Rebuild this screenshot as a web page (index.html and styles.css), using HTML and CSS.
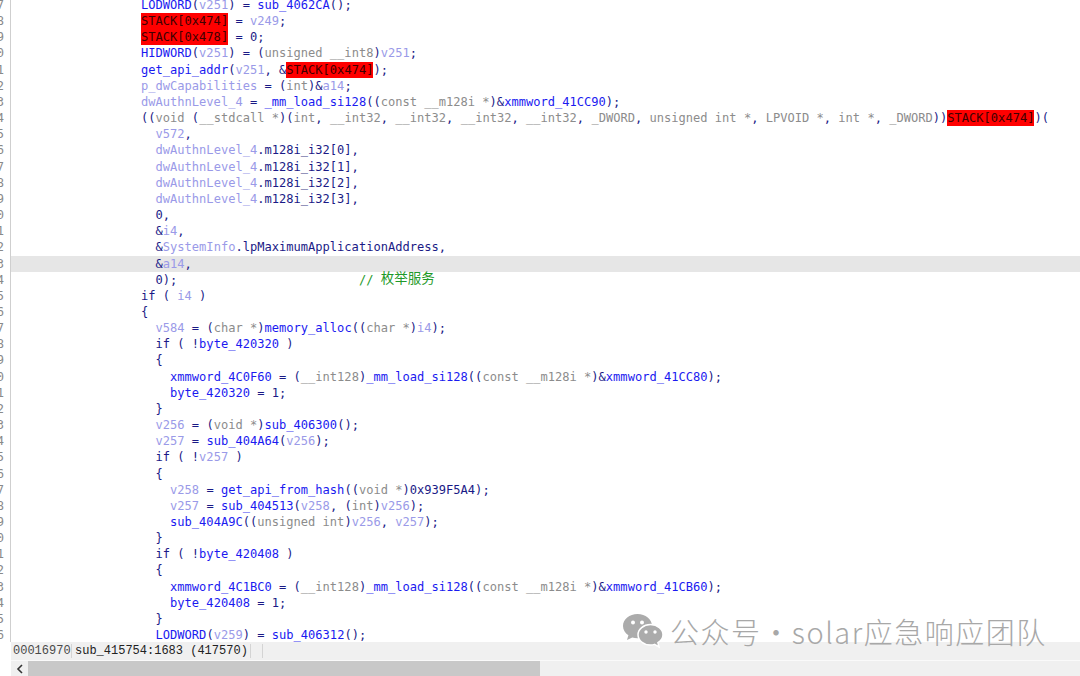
FILE: index.html
```html
<!DOCTYPE html>
<html lang="zh">
<head>
<meta charset="utf-8">
<title>Pseudocode</title>
<link rel="stylesheet" href="styles.css">
</head>
<body>
<main class="app">
<section class="view">
<div class="scroll">
<div class="line"><span class="num">1667</span><code class="code"><b>LODWORD</b>(<i>v251</i>) = <b>sub_4062CA</b>();</code></div>
<div class="line"><span class="num">1668</span><code class="code"><mark>STACK[0x474]</mark> = <i>v249</i>;</code></div>
<div class="line"><span class="num">1669</span><code class="code"><mark>STACK[0x478]</mark> = 0;</code></div>
<div class="line"><span class="num">1670</span><code class="code"><b>HIDWORD</b>(<i>v251</i>) = (<u>unsigned __int8</u>)<i>v251</i>;</code></div>
<div class="line"><span class="num">1671</span><code class="code"><b>get_api_addr</b>(<i>v251</i>, &amp;<mark>STACK[0x474]</mark>);</code></div>
<div class="line"><span class="num">1672</span><code class="code"><i>p_dwCapabilities</i> = (<u>int</u>)&amp;<i>a14</i>;</code></div>
<div class="line"><span class="num">1673</span><code class="code"><i>dwAuthnLevel_4</i> = <b>_mm_load_si128</b>((<u>const __m128i *</u>)&amp;<b>xmmword_41CC90</b>);</code></div>
<div class="line"><span class="num">1674</span><code class="code">((<u>void</u> (<u>__stdcall *</u>)(<u>int</u>, <u>__int32</u>, <u>__int32</u>, <u>__int32</u>, <u>__int32</u>, <u>_DWORD</u>, <u>unsigned int *</u>, <u>LPVOID *</u>, <u>int *</u>, <u>_DWORD</u>))<mark>STACK[0x474]</mark>)(</code></div>
<div class="line"><span class="num">1675</span><code class="code">  <i>v572</i>,</code></div>
<div class="line"><span class="num">1676</span><code class="code">  <i>dwAuthnLevel_4</i>.m128i_i32[0],</code></div>
<div class="line"><span class="num">1677</span><code class="code">  <i>dwAuthnLevel_4</i>.m128i_i32[1],</code></div>
<div class="line"><span class="num">1678</span><code class="code">  <i>dwAuthnLevel_4</i>.m128i_i32[2],</code></div>
<div class="line"><span class="num">1679</span><code class="code">  <i>dwAuthnLevel_4</i>.m128i_i32[3],</code></div>
<div class="line"><span class="num">1680</span><code class="code">  0,</code></div>
<div class="line"><span class="num">1681</span><code class="code">  &amp;<i>i4</i>,</code></div>
<div class="line"><span class="num">1682</span><code class="code">  &amp;<i>SystemInfo</i>.lpMaximumApplicationAddress,</code></div>
<div class="line current"><span class="num">1683</span><code class="code">  &amp;<i>a14</i>,</code></div>
<div class="line"><span class="num">1684</span><code class="code">  0);                         <s>// <span class="cjk">枚举服务</span></s></code></div>
<div class="line"><span class="num">1685</span><code class="code">if ( <i>i4</i> )</code></div>
<div class="line"><span class="num">1686</span><code class="code">{</code></div>
<div class="line"><span class="num">1687</span><code class="code">  <i>v584</i> = (<u>char *</u>)<b>memory_alloc</b>((<u>char *</u>)<i>i4</i>);</code></div>
<div class="line"><span class="num">1688</span><code class="code">  if ( !<b>byte_420320</b> )</code></div>
<div class="line"><span class="num">1689</span><code class="code">  {</code></div>
<div class="line"><span class="num">1690</span><code class="code">    <b>xmmword_4C0F60</b> = (<u>__int128</u>)<b>_mm_load_si128</b>((<u>const __m128i *</u>)&amp;<b>xmmword_41CC80</b>);</code></div>
<div class="line"><span class="num">1691</span><code class="code">    <b>byte_420320</b> = 1;</code></div>
<div class="line"><span class="num">1692</span><code class="code">  }</code></div>
<div class="line"><span class="num">1693</span><code class="code">  <i>v256</i> = (<u>void *</u>)<b>sub_406300</b>();</code></div>
<div class="line"><span class="num">1694</span><code class="code">  <i>v257</i> = <b>sub_404A64</b>(<i>v256</i>);</code></div>
<div class="line"><span class="num">1695</span><code class="code">  if ( !<i>v257</i> )</code></div>
<div class="line"><span class="num">1696</span><code class="code">  {</code></div>
<div class="line"><span class="num">1697</span><code class="code">    <i>v258</i> = <b>get_api_from_hash</b>((<u>void *</u>)0x939F5A4);</code></div>
<div class="line"><span class="num">1698</span><code class="code">    <i>v257</i> = <b>sub_404513</b>(<i>v258</i>, (<u>int</u>)<i>v256</i>);</code></div>
<div class="line"><span class="num">1699</span><code class="code">    <b>sub_404A9C</b>((<u>unsigned int</u>)<i>v256</i>, <i>v257</i>);</code></div>
<div class="line"><span class="num">1700</span><code class="code">  }</code></div>
<div class="line"><span class="num">1701</span><code class="code">  if ( !<b>byte_420408</b> )</code></div>
<div class="line"><span class="num">1702</span><code class="code">  {</code></div>
<div class="line"><span class="num">1703</span><code class="code">    <b>xmmword_4C1BC0</b> = (<u>__int128</u>)<b>_mm_load_si128</b>((<u>const __m128i *</u>)&amp;<b>xmmword_41CB60</b>);</code></div>
<div class="line"><span class="num">1704</span><code class="code">    <b>byte_420408</b> = 1;</code></div>
<div class="line"><span class="num">1705</span><code class="code">  }</code></div>
<div class="line"><span class="num">1706</span><code class="code">  <b>LODWORD</b>(<i>v259</i>) = <b>sub_406312</b>();</code></div>
</div>
</section>
<footer class="status">
<span class="cell offset">00016970</span>
<span class="cell where">sub_415754:1683 (417570)</span>
<span class="cell empty"></span>
</footer>
<div class="hbar">
<span class="arrow"><svg width="8" height="10" viewBox="0 0 8 10"><path d="M6 1 L2 5 L6 9" fill="none" stroke="#333" stroke-width="1.6"/></svg></span>
<span class="thumb"></span>
</div>
</main>
<aside class="mark">
<svg class="wechat" width="42" height="36" viewBox="0 0 42 36">
<path d="M15.5 1C7.5 1 1 6.3 1 13c0 3.8 2.1 7 5.4 9.300L5 27l5.200-2.500c1.700.5 3.400.7 5.300.7 8 0 14.500-5.400 14.500-12.200S23.500 1 15.500 1z" fill="#ababab"/>
<path d="M28.500 11.500c-7 0-12.500 4.700-12.500 10.300S21.500 32 28.500 32c1.400 0 2.800-.2 4-.6l4.500 2.600-1.100-4.300c3-1.900 5.100-4.700 5.100-7.900 0-5.600-5.500-10.300-12.500-10.300z" fill="#ababab" stroke="#fff" stroke-width="1.500"/>
<circle cx="11" cy="9.500" r="2" fill="#fff"/><circle cx="20" cy="9.500" r="2" fill="#fff"/>
<circle cx="24" cy="19" r="1.700" fill="#fff"/><circle cx="33" cy="19" r="1.700" fill="#fff"/>
</svg>
<span class="mark-text">公众号 · solar应急响应团队</span>
</aside>
</body>
</html>
```
FILE: styles.css
```css
* { box-sizing: border-box; }
html, body { margin: 0; height: 100%; background: #fff; overflow: hidden; }
.app { display: flex; flex-direction: column; height: 676px; width: 1080px; }
.view { flex: 1; min-height: 0; overflow: hidden; }
.scroll { margin-top: -3px; font-family: "DejaVu Sans Mono", "Noto Sans CJK SC", monospace; font-size: 12.07px; }
.line { display: flex; height: 16.16px; line-height: 16.16px; white-space: pre; }
.num { flex: none; width: 11px; display: flex; justify-content: flex-end; overflow: hidden; padding-right: 6px; border-right: 1px solid #cfcfcf; color: #8a8a8a; }
.code { flex: 1; padding-left: 130px; font: inherit; color: #1a1a86; }
.current .code { background: #e6e6e6; }
.code b { font-weight: normal; color: #1a1af0; }
.code i { font-style: normal; color: #9a9ae8; }
.code u { text-decoration: none; color: #8c8c8c; }
.code s { text-decoration: none; color: #1f9a2a; }
.cjk { font-family: "Noto Sans CJK SC", sans-serif; font-size: 13.5px; line-height: 1; position: relative; top: -1px; }
.code mark { background: #ff0000; color: #400000; padding: 1px 0; }
.status { flex: none; height: 19px; margin-left: 11px; display: flex; align-items: center; background: #f0f0f0; font-family: "Liberation Mono", monospace; font-size: 12px; color: #222; border-bottom: 1px solid #fafafa; }
.cell { height: 14px; line-height: 15px; white-space: pre; border-right: 1px solid #d4d4d4; }
.offset { width: 61px; padding-left: 2px; color: #4a4a4a; }
.where { width: 179px; padding-left: 3px; }
.empty { width: 12px; }
.hbar { flex: none; height: 15px; margin-left: 11px; display: flex; background: #f0f0f0; }
.arrow { width: 17px; display: flex; align-items: center; justify-content: center; }
.thumb { width: 512px; background: #c8c8c8; }
.mark { position: absolute; left: 622px; top: 611px; display: flex; align-items: center; gap: 6px; height: 40px; }
.wechat { flex: none; }
.mark-text { font-family: "Noto Sans CJK SC", sans-serif; font-size: 29px; font-weight: 300; color: #a8a8a8; white-space: nowrap; letter-spacing: 1.5px; word-spacing: -8px; }
```
